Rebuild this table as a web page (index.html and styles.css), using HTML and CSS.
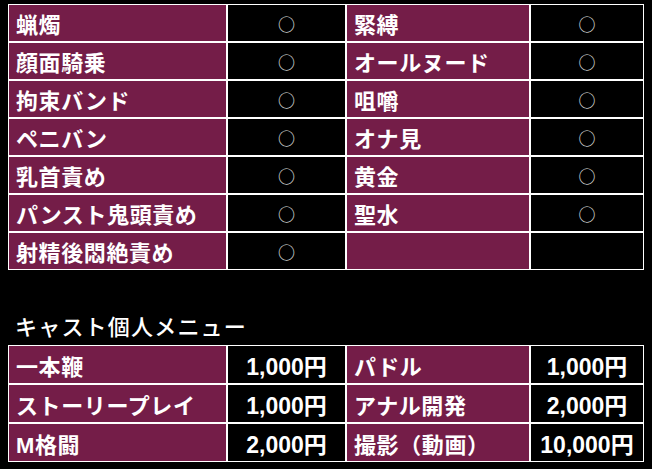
FILE: index.html
```html
<!DOCTYPE html>
<html lang="ja">
<head>
<meta charset="utf-8">
<link rel="stylesheet" href="styles.css">
</head>
<body>
<table class="grid play">
  <colgroup><col class="c1"><col class="c2"><col class="c3"><col class="c4"></colgroup>
  <tr><td class="name">蝋燭</td><td class="mark">○</td><td class="name">緊縛</td><td class="mark">○</td></tr>
  <tr><td class="name">顔面騎乗</td><td class="mark">○</td><td class="name">オールヌード</td><td class="mark">○</td></tr>
  <tr><td class="name">拘束バンド</td><td class="mark">○</td><td class="name">咀嚼</td><td class="mark">○</td></tr>
  <tr><td class="name">ペニバン</td><td class="mark">○</td><td class="name">オナ見</td><td class="mark">○</td></tr>
  <tr><td class="name">乳首責め</td><td class="mark">○</td><td class="name">黄金</td><td class="mark">○</td></tr>
  <tr><td class="name">パンスト鬼頭責め</td><td class="mark">○</td><td class="name">聖水</td><td class="mark">○</td></tr>
  <tr><td class="name">射精後悶絶責め</td><td class="mark">○</td><td class="name"></td><td class="mark"></td></tr>
</table>
<div class="heading">キャスト個人メニュー</div>
<table class="grid menu">
  <colgroup><col class="c1"><col class="c2"><col class="c3"><col class="c4"></colgroup>
  <tr><td class="name">一本鞭</td><td class="price">1,000円</td><td class="name">パドル</td><td class="price">1,000円</td></tr>
  <tr><td class="name">ストーリープレイ</td><td class="price">1,000円</td><td class="name">アナル開発</td><td class="price">2,000円</td></tr>
  <tr><td class="name">M格闘</td><td class="price">2,000円</td><td class="name">撮影（動画）</td><td class="price">10,000円</td></tr>
</table>
</body>
</html>
```
FILE: styles.css
```css
html, body {
  background: #000;
}
body {
  margin: 0;
  padding: 4px 8px 0 8px;
  color: #fff;
  font-family: "Liberation Sans", "Noto Sans CJK JP", sans-serif;
}
.grid {
  width: 636px;
  border-collapse: separate;
  border-spacing: 0;
  table-layout: fixed;
}
.c1 { width: 219px; }
.c2 { width: 119px; }
.c3 { width: 184px; }
.c4 { width: 114px; }
.grid td {
  border: 1px solid #fff;
  height: 36px;
  padding: 0;
  white-space: nowrap;
  overflow: hidden;
}
.menu td {
  height: 37px;
}
.name {
  background: #741d48;
  padding-left: 7px !important;
  font-size: 22px;
  font-weight: bold;
  letter-spacing: 0.6px;
}
.mark {
  text-align: center;
  font-family: "Noto Sans CJK JP", sans-serif;
  font-size: 17px;
  color: #e0e0e0;
  background: #000;
}
.price {
  text-align: center;
  font-size: 23px;
  font-weight: bold;
  background: #000;
}
.heading {
  margin-top: 43px;
  margin-bottom: 2px;
  padding-left: 7px;
  font-size: 22px;
  font-weight: 500;
  line-height: 30px;
  letter-spacing: 1.2px;
}
```
